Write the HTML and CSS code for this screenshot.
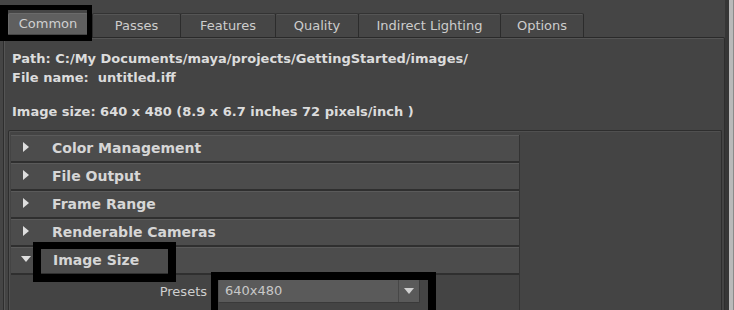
FILE: index.html
```html
<!DOCTYPE html>
<html lang="en">
<head>
	<meta charset="UTF-8">
	<title>Render Settings</title>
	<link rel="stylesheet" href="styles.css">
</head>
<body>
	<div class="window">
		<div class="main">
			<ul class="tabs">
				<li class="tab active">Common</li>
				<li class="tab w-passes">Passes</li>
				<li class="tab w-features">Features</li>
				<li class="tab w-quality">Quality</li>
				<li class="tab w-indirect">Indirect Lighting</li>
				<li class="tab w-options">Options</li>
			</ul>
			<div class="panel">
				<div class="info">
					<p>Path: C:/My Documents/maya/projects/GettingStarted/images/</p>
					<p>File name:&nbsp; untitled.iff</p>
					<p class="gap">Image size: 640 x 480 (8.9 x 6.7 inches 72 pixels/inch )</p>
				</div>
				<div class="frames">
					<div class="sections">
						<div class="frame"><span class="arrow"></span>Color Management</div>
						<div class="frame"><span class="arrow"></span>File Output</div>
						<div class="frame"><span class="arrow"></span>Frame Range</div>
						<div class="frame"><span class="arrow"></span>Renderable Cameras</div>
						<div class="frame open"><span class="arrow down"></span>Image Size</div>
						<div class="frame-body">
							<label class="field-label">Presets</label>
							<div class="combo">
								<span class="combo-text">640x480</span>
								<span class="combo-btn"><span class="tri"></span></span>
							</div>
						</div>
					</div>
				</div>
			</div>
		</div>
		<div class="scroll"></div>

		<!-- annotation boxes -->
		<div class="mark mark-tab"></div>
		<div class="mark mark-size"></div>
		<div class="mark mark-combo"></div>
	</div>
</body>
</html>
```

FILE: styles.css
```css
* {
	margin: 0;
	padding: 0;
	box-sizing: border-box;
}
li {
	list-style: none;
}
body {
	background: #454545;
	font-family: "DejaVu Sans", Verdana, sans-serif;
	color: #d8d8d8;
}
.window {
	position: relative;
	width: 734px;
	height: 310px;
	overflow: hidden;
	display: flex;
}
.main {
	flex: 1;
	padding-left: 3px;
	display: flex;
	flex-direction: column;
}
.scroll {
	width: 9px;
	border-left: 4px solid #363636;
	background: #b9b9b9;
	border-right: 1px solid #8a8a8a;
}

/* tabs */
.tabs {
	display: flex;
	padding: 13px 0 0 5px;
	height: 37px;
}
.tab {
	height: 24px;
	line-height: 23px;
	font-size: 13px;
	font-family: "DejaVu Sans", sans-serif;
	color: #cdcdcd;
	text-align: center;
	background: #464646;
	border: 1px solid #2c2c2c;
	border-top-color: #333;
	border-bottom: none;
	border-radius: 2px 2px 0 0;
	box-shadow: inset 0 1px 0 #555;
	margin-right: -1px;
}
.tab.active {
	width: 80px;
	background: #5f5f5f;
	border-color: #6a6a6a;
	color: #d0d0d0;
	height: 21px;
	line-height: 19px;
	box-shadow: none;
	margin-right: 4px;
}
.w-passes { width: 89px; }
.w-features { width: 96px; }
.w-quality { width: 84px; }
.w-indirect { width: 143px; }
.w-options { width: 84px; }

/* panel */
.panel {
	flex: 1;
	border: 1px solid #2e2e2e;
	border-top-color: #2a2a2a;
	border-bottom: none;
	box-shadow: inset 1px 1px 0 #555;
	border-radius: 2px 2px 0 0;
	background: #444;
	display: flex;
	flex-direction: column;
}
.info {
	padding: 11px 0 0 8px;
	height: 92px;
	font-size: 13px;
	font-weight: bold;
	line-height: 19px;
	color: #dcdcdc;
}
.info .gap {
	margin-top: 15px;
}
.frames {
	flex: 1;
	margin: 0 2px 0 4px;
	border: 1px solid #2e2e2e;
	border-bottom: none;
	box-shadow: inset 1px 1px 0 #505050;
	border-radius: 2px 2px 0 0;
	padding: 4px 0 0 2px;
}
.sections {
	width: 509px;
	height: 100%;
	border-right: 1px solid #333;
}
.frame {
	height: 28px;
	background: #4c4c4c;
	border-top: 1px solid #5a5a5a;
	border-bottom: 2px solid #2f2f2f;
	font-size: 14px;
	font-weight: bold;
	color: #d6d6d6;
	line-height: 25px;
	display: flex;
	align-items: center;
}
.arrow {
	width: 0;
	height: 0;
	margin: -4px 23px 0 12px;
	border-top: 5px solid transparent;
	border-bottom: 5px solid transparent;
	border-left: 6px solid #dedede;
}
.arrow.down {
	border-left: 5px solid transparent;
	border-right: 5px solid transparent;
	border-top: 6px solid #dedede;
	border-bottom: none;
	margin: -4px 22px 0 10px;
}
.frame-body {
	display: flex;
	align-items: center;
	padding-top: 4px;
}
.field-label {
	width: 207px;
	text-align: right;
	font-size: 13px;
	color: #cfcfcf;
	padding-right: 11px;
}
.combo {
	display: flex;
	width: 202px;
	height: 24px;
	background: #5a5a5a;
	border: 1px solid #4f4f4f;
	border-right-color: #3a3a3a;
	border-bottom-color: #3a3a3a;
	border-radius: 2px;
}
.combo-text {
	flex: 1;
	font-size: 13px;
	color: #c8c8c8;
	line-height: 22px;
	padding-left: 6px;
}
.combo-btn {
	width: 21px;
	border-left: 1px solid #474747;
	display: flex;
	align-items: center;
	justify-content: center;
}
.tri {
	width: 0;
	height: 0;
	border-left: 5px solid transparent;
	border-right: 5px solid transparent;
	border-top: 6px solid #d0d0d0;
}

/* black annotation outlines laid over the UI */
.mark {
	position: absolute;
	border: 6px solid #000;
}
.mark-tab {
	left: 0;
	top: 5px;
	width: 92px;
	height: 36px;
	border-width: 5px 5px 6px 8px;
}
.mark-size {
	left: 33px;
	top: 242px;
	width: 143px;
	height: 40px;
	border-width: 7px 8px 8px 8px;
}
.mark-combo {
	left: 211px;
	top: 272px;
	width: 225px;
	height: 50px;
	border-width: 8px 8px 0 7px;
}
```
